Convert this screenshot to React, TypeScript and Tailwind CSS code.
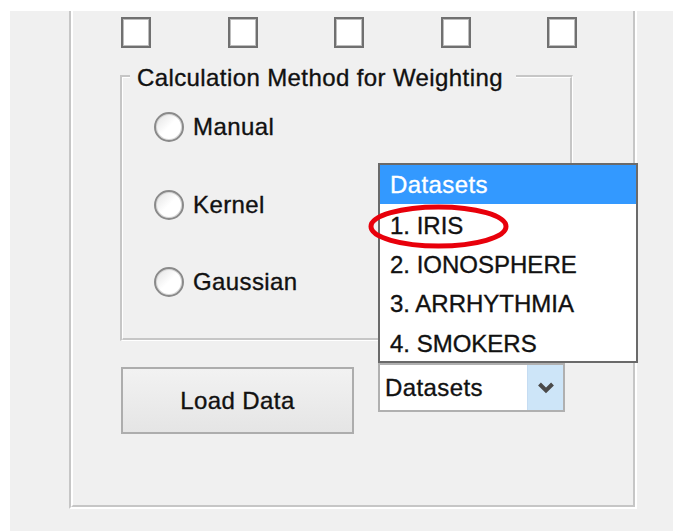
import React from "react";

const datasets = ["1. IRIS", "2. IONOSPHERE", "3. ARRHYTHMIA", "4. SMOKERS"];
const methods = ["Manual", "Kernel", "Gaussian"];

function CheckBox() {
  return (
    <div className="w-[30px] h-[31px] border-2 border-[#707070] bg-white shadow-[inset_0_0_0_1px_#bdbdbd]" />
  );
}

function Radio({ label }: { label: string }) {
  return (
    <div className="flex items-center h-[30px]">
      <div className="w-[30px] h-[30px] rounded-full border-2 border-[#8a8a8a] bg-gradient-to-br from-[#e2e2e2] via-white to-white shadow-[inset_0_0_0_1px_#d8d8d8]" />
      <span className="ml-[9px] leading-[24px] tracking-[0.4px]">{label}</span>
    </div>
  );
}

function Chevron() {
  return (
    <svg width="18" height="13" viewBox="0 0 18 13">
      <path d="M2.5 3 L9 9.5 L15.5 3" fill="none" stroke="#4a4a4a" strokeWidth="4" strokeLinecap="butt" strokeLinejoin="miter" />
    </svg>
  );
}

export default function App() {
  return (
    <div className="w-[673px] h-[531px] overflow-hidden bg-white pt-[11px] pl-[10px] font-['Liberation_Sans',Arial,sans-serif] text-[24px] text-[#111] [-webkit-text-stroke:0.35px]">
      <div className="h-full bg-[#f0f0f0] pl-[59px]">
        {/* etched panel frame */}
        <div className="w-[568px] h-[498px] border-l-2 border-l-[#c6c6c6] border-r-2 border-r-white border-b-2 border-b-white">
          <div className="relative h-full border-l-2 border-l-white border-r-2 border-r-[#c6c6c6] border-b-2 border-b-[#c6c6c6]">
            {/* checkbox row */}
            <div className="flex gap-[76.5px] pl-[48px] pt-[6px]">
              <CheckBox />
              <CheckBox />
              <CheckBox />
              <CheckBox />
              <CheckBox />
            </div>

            {/* weighting method group */}
            <div className="relative mt-[27px] ml-[47px] w-[453px] h-[266px] border-t-2 border-l-2 border-[#c6c6c6] border-r border-r-white border-b border-b-white">
              <div className="h-full border-t border-l border-white border-r-2 border-r-[#c6c6c6] border-b-2 border-b-[#c6c6c6] pt-[34px] pl-[31px] flex flex-col gap-[47.5px]">
                {methods.map((m) => (
                  <Radio key={m} label={m} />
                ))}
              </div>
              <span className="absolute left-[8px] top-[-11px] bg-[#f0f0f0] pl-[7px] pr-[13px] leading-[24px] tracking-[0.4px] whitespace-nowrap">
                Calculation Method for Weighting
              </span>
            </div>

            {/* bottom controls */}
            <div className="flex items-start mt-[22px] pl-[48px]">
              <button className="mt-[4px] w-[233px] h-[67px] border-2 border-[#adadad] bg-gradient-to-b from-[#f2f2f2] to-[#e5e5e5] flex items-center justify-center leading-[24px] tracking-[0.4px] text-[#111]">
                Load Data
              </button>
              <div className="ml-[24px] w-[187px] h-[49px] border-2 border-[#b0b0b0] bg-white flex">
                <span className="flex-1 flex items-center pl-[5px] leading-[24px] tracking-[0.4px]">Datasets</span>
                <div className="w-[36px] h-full bg-[#cde5f8] border-l border-[#c5dcf2] flex items-center justify-center">
                  <Chevron />
                </div>
              </div>
            </div>

            {/* open dropdown list */}
            <div className="absolute left-[305px] top-[152px] w-[260px] h-[200px] border-2 border-[#6a6a6a] bg-white z-10">
              <div className="h-[39px] bg-[#3399ff] text-white flex items-center pl-[10px] leading-[24px] tracking-[0.4px]">
                Datasets
              </div>
              {datasets.map((d) => (
                <div key={d} className="h-[39.3px] flex items-center pl-[10px] pt-[4px] leading-[24px]">
                  {d}
                </div>
              ))}
              <svg className="absolute left-[-12px] top-[39px]" width="142" height="46" viewBox="0 0 142 46">
                <ellipse cx="70.5" cy="22.5" rx="67.5" ry="19.5" fill="none" stroke="#e8000b" strokeWidth="5" />
              </svg>
            </div>
          </div>
        </div>
      </div>
    </div>
  );
}
